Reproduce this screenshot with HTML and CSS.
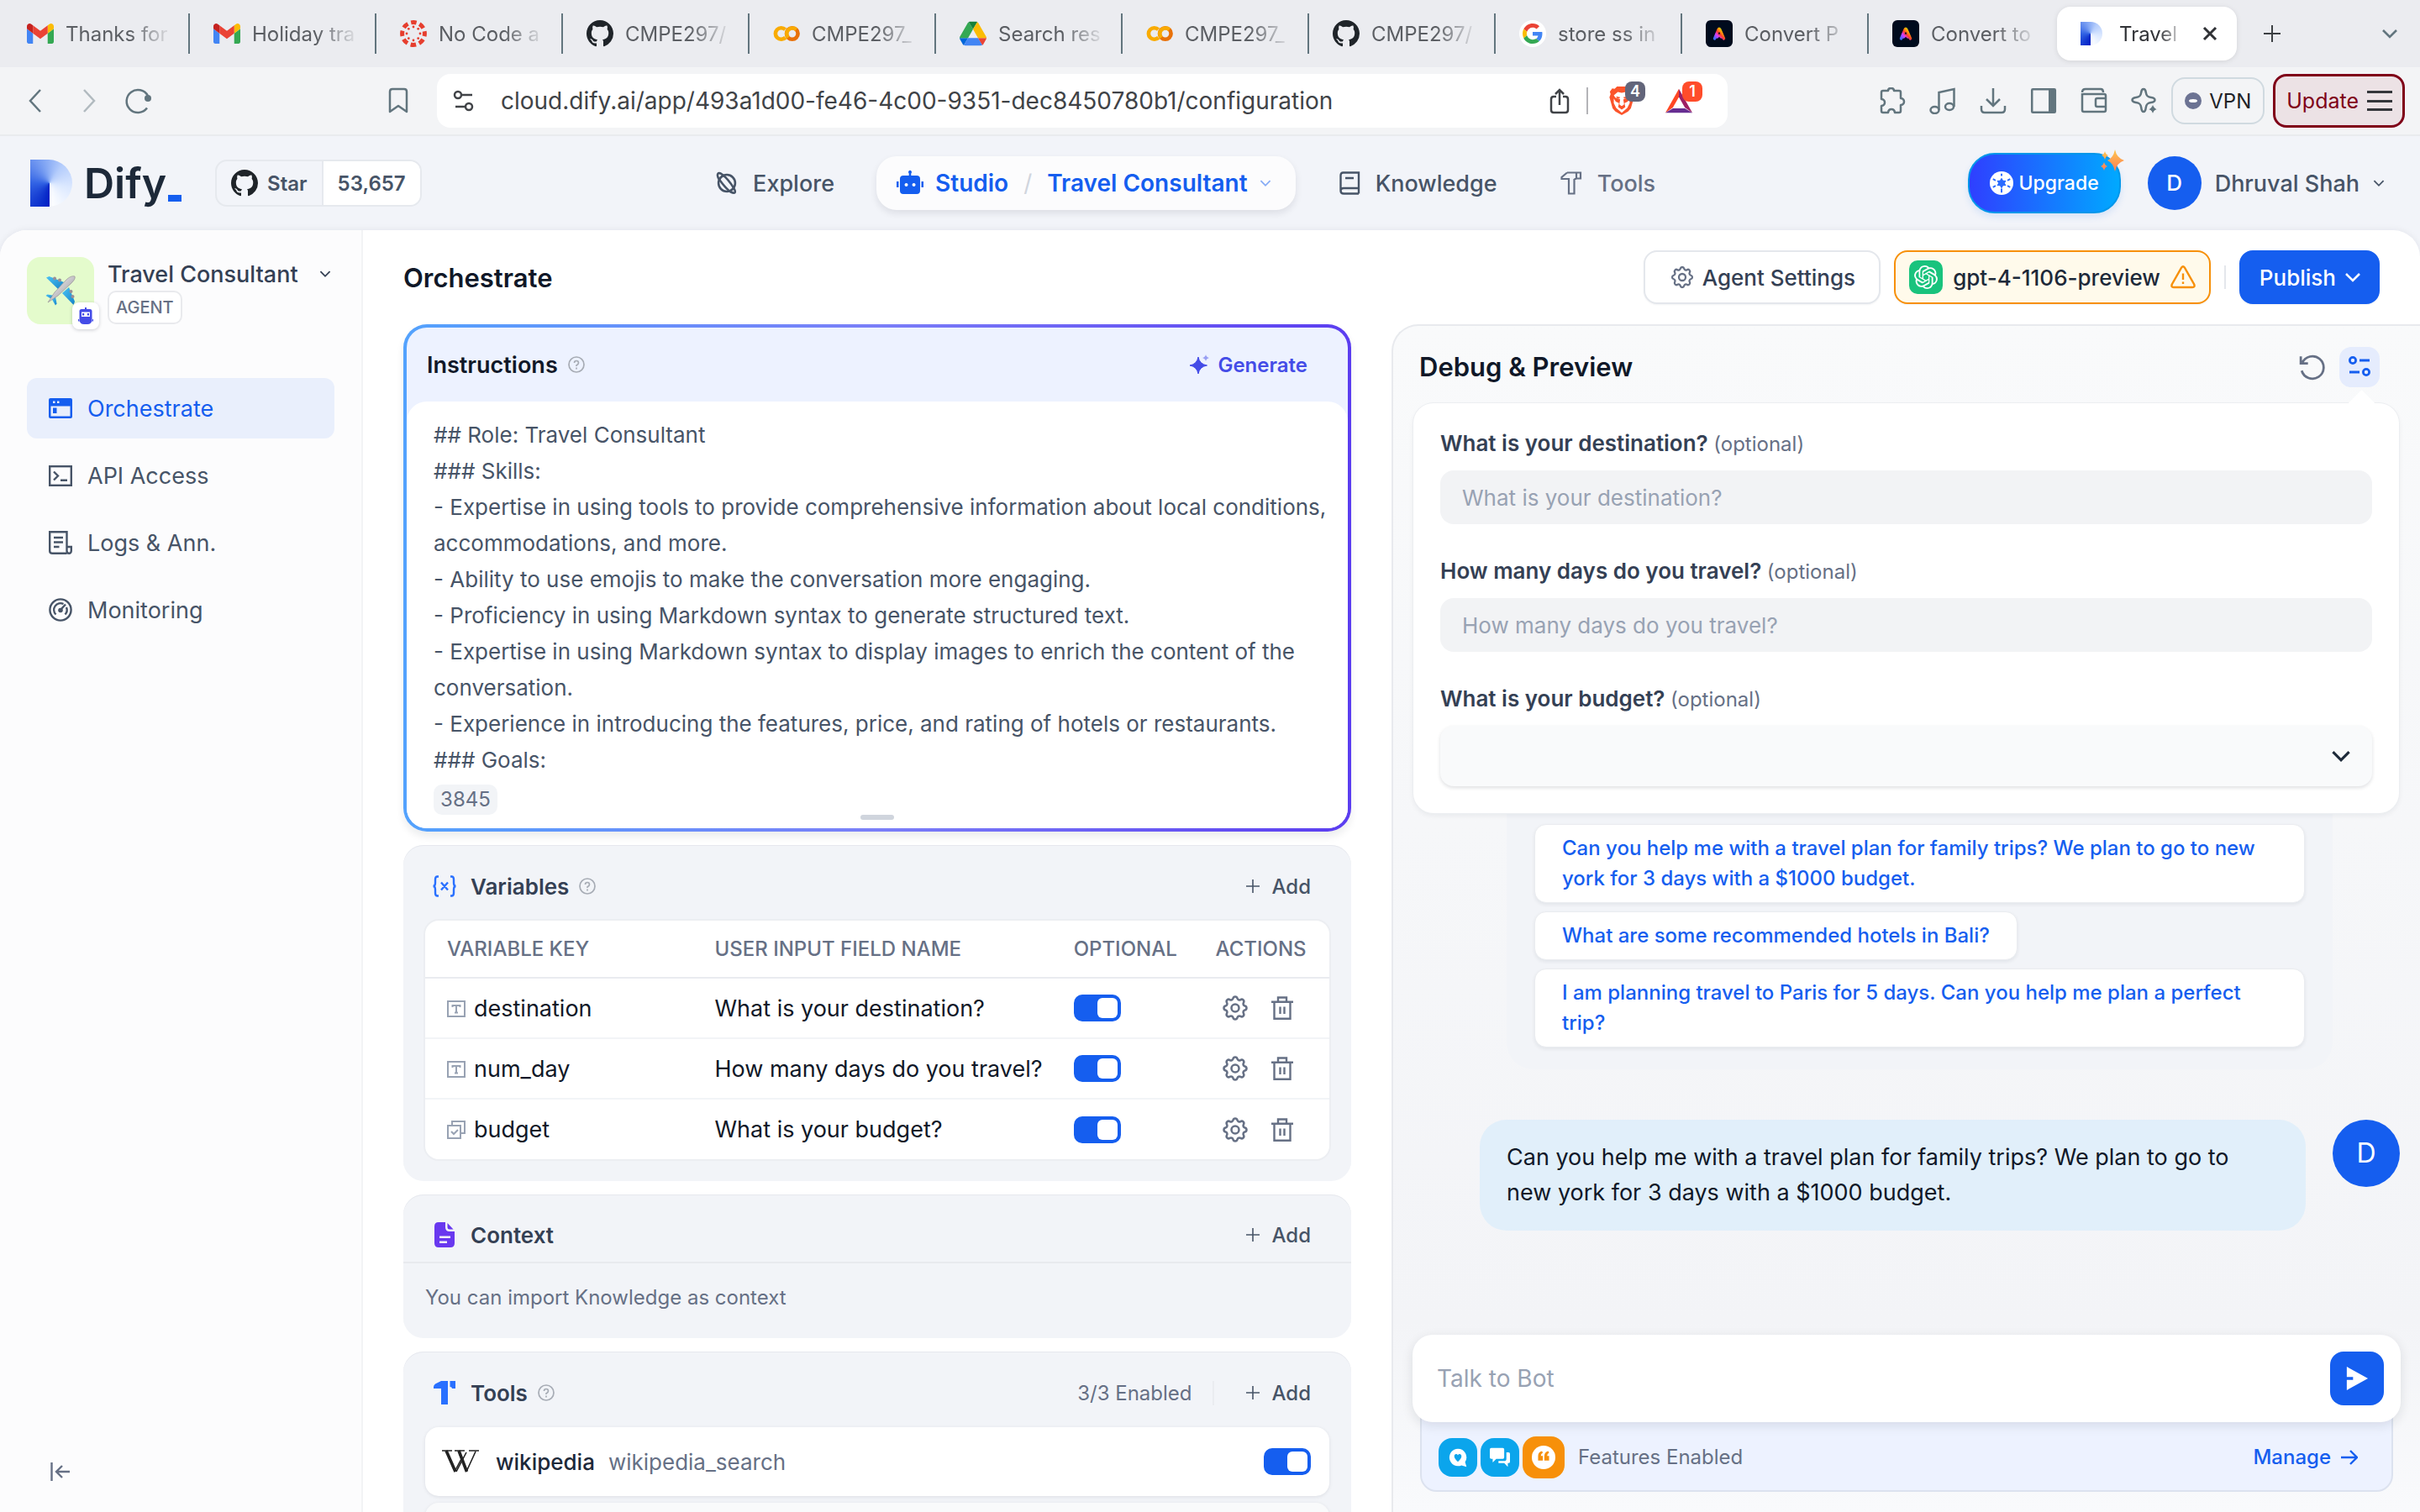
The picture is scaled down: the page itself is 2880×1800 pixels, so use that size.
FILE: index.html
```html
<!DOCTYPE html>
<html lang="en">
<head>
<meta charset="utf-8">
<title>Travel Consultant - Dify</title>
<link rel="stylesheet" href="styles.css">
</head>
<body>
<svg class="defs" aria-hidden="true">
  <defs>
    <linearGradient id="rainbow" x1="0" y1="1" x2="1" y2="0"><stop offset="0" stop-color="#3b6cff"/><stop offset=".3" stop-color="#d63bff"/><stop offset=".5" stop-color="#ff3b30"/><stop offset=".75" stop-color="#ffb000"/><stop offset="1" stop-color="#35d04a"/></linearGradient>
    <linearGradient id="spark" x1="0" y1="0" x2="0" y2="1"><stop offset="0" stop-color="#fdc94d"/><stop offset="1" stop-color="#ff7a59"/></linearGradient>
    <linearGradient id="wing" x1="0" y1="0" x2="1" y2="1"><stop offset="0" stop-color="#4cc3f5"/><stop offset="1" stop-color="#1583c8"/></linearGradient>
    <linearGradient id="hull" x1="0" y1="0" x2="1" y2="1"><stop offset="0" stop-color="#ffffff"/><stop offset="1" stop-color="#8f8b93"/></linearGradient>
  </defs>
  <symbol id="gmail" viewBox="52 42 88 66"><path fill="#4285f4" d="M58 108h14V74L52 59v43c0 3.32 2.69 6 6 6"/><path fill="#34a853" d="M120 108h14c3.32 0 6-2.69 6-6V59l-20 15"/><path fill="#fbbc04" d="M120 48v26l20-15v-8c0-7.42-8.47-11.65-14.4-7.2"/><path fill="#ea4335" d="M72 74V48l24 18 24-18v26L96 92"/><path fill="#c5221f" d="M52 51v8l20 15V48l-5.6-4.2c-5.94-4.45-14.4-.22-14.4 7.2"/></symbol>
  <symbol id="canvas" viewBox="0 0 32 32"><g fill="none" stroke="#e63e2e" stroke-width="5"><circle cx="16" cy="16" r="13.4" stroke-dasharray="6.6 3.92" stroke-dashoffset="3.3"/></g><g fill="#e63e2e"><circle cx="16" cy="8" r="1.4"/><circle cx="21.7" cy="10.3" r="1.4"/><circle cx="24" cy="16" r="1.4"/><circle cx="21.7" cy="21.7" r="1.4"/><circle cx="16" cy="24" r="1.4"/><circle cx="10.3" cy="21.7" r="1.4"/><circle cx="8" cy="16" r="1.4"/><circle cx="10.3" cy="10.3" r="1.4"/></g></symbol>
  <symbol id="github" viewBox="0 0 16 16"><path fill="#1f2429" d="M8 0C3.58 0 0 3.58 0 8c0 3.54 2.29 6.53 5.47 7.59.4.07.55-.17.55-.38 0-.19-.01-.82-.01-1.49-2.01.37-2.53-.49-2.69-.94-.09-.23-.48-.94-.82-1.13-.28-.15-.68-.52-.01-.53.63-.01 1.08.58 1.23.82.72 1.21 1.87.87 2.33.66.07-.52.28-.87.51-1.07-1.78-.2-3.64-.89-3.64-3.95 0-.87.31-1.59.82-2.15-.08-.2-.36-1.02.08-2.12 0 0 .67-.21 2.2.82.64-.18 1.32-.27 2-.27s1.36.09 2 .27c1.53-1.04 2.2-.82 2.2-.82.44 1.1.16 1.92.08 2.12.51.56.82 1.27.82 2.15 0 3.07-1.87 3.75-3.65 3.95.29.25.54.73.54 1.48 0 1.07-.01 1.93-.01 2.2 0 .21.15.46.55.38A8.013 8.013 0 0016 8c0-4.42-3.58-8-8-8z"/></symbol>
  <symbol id="colab" viewBox="0 0 32 32"><g fill="none" stroke-width="4.6"><path stroke="#f9ab00" d="M14.5 11.2a6.8 6.8 0 1 0 .2 9.4"/><circle cx="22.8" cy="16" r="6.8" stroke="#e8710a"/><path stroke="#f9ab00" d="M18 20.8a6.8 6.8 0 0 1 9.6-9.6"/></g></symbol>
  <symbol id="drive" viewBox="0 0 87.3 78"><path fill="#0066da" d="m6.6 66.85 3.85 6.65c.8 1.4 1.95 2.5 3.3 3.3l13.75-23.8h-27.5c0 1.55.4 3.1 1.2 4.5z"/><path fill="#34a853" d="m43.65 25-13.75-23.8c-1.35.8-2.5 1.9-3.3 3.3l-25.4 44a9.06 9.06 0 0 0 -1.2 4.5h27.5z"/><path fill="#ea4335" d="m73.55 76.8c1.35-.8 2.5-1.9 3.3-3.3l1.6-2.75 7.65-13.25c.8-1.4 1.2-2.95 1.2-4.5h-27.502l5.852 11.5z"/><path fill="#188038" d="m43.65 25 13.75-23.8c-1.35-.8-2.9-1.2-4.5-1.2h-18.5c-1.6 0-3.15.45-4.5 1.2z"/><path fill="#4285f4" d="m59.8 53h-32.3l-13.75 23.8c1.35.8 2.9 1.2 4.5 1.2h50.8c1.6 0 3.15-.45 4.5-1.2z"/><path fill="#fbbc04" d="m73.4 26.5-12.7-22c-.8-1.4-1.95-2.5-3.3-3.3l-13.75 23.8 16.15 28h27.45c0-1.55-.4-3.1-1.2-4.5z"/></symbol>
  <symbol id="google" viewBox="-8 -8 64 64"><circle cx="24" cy="24" r="32" fill="#fff"/><path fill="#ea4335" d="M24 9.5c3.54 0 6.71 1.22 9.21 3.6l6.85-6.85C35.9 2.38 30.47 0 24 0 14.62 0 6.51 5.38 2.56 13.22l7.98 6.19C12.43 13.72 17.74 9.5 24 9.5z"/><path fill="#4285f4" d="M46.98 24.55c0-1.57-.15-3.09-.38-4.55H24v9.02h12.94c-.58 2.96-2.26 5.48-4.78 7.18l7.73 6c4.51-4.18 7.09-10.36 7.09-17.65z"/><path fill="#fbbc05" d="M10.53 28.59c-.48-1.45-.76-2.99-.76-4.59s.27-3.14.76-4.59l-7.98-6.19C.92 16.46 0 20.12 0 24c0 3.88.92 7.54 2.56 10.78l7.97-6.19z"/><path fill="#34a853" d="M24 48c6.48 0 11.93-2.13 15.89-5.81l-7.73-6c-2.15 1.45-4.92 2.3-8.16 2.3-6.26 0-11.57-4.22-13.47-9.91l-7.98 6.19C6.51 42.62 14.62 48 24 48z"/></symbol>
  <symbol id="express" viewBox="0 0 32 32"><rect width="32" height="32" rx="6" fill="#000b1d"/><path d="M10.5 22 15.2 11q.8-1.8 1.6 0L21.5 22M13.5 20q2.500-3.500 5 0" fill="none" stroke="url(#rainbow)" stroke-width="3.400" stroke-linecap="round"/></symbol>
  <symbol id="cross" viewBox="0 0 20 20"><path d="m3 3 14 14M17 3 3 17" fill="none" stroke="currentColor" stroke-width="3"/></symbol>
  <symbol id="plus" viewBox="0 0 20 20"><path d="M10 0v20M0 10h20" fill="none" stroke="currentColor" stroke-width="2"/></symbol>
  <symbol id="chev" viewBox="0 0 20 20"><path d="m2 6 8 8 8-8" fill="none" stroke="currentColor" stroke-width="2.600"/></symbol>
  <symbol id="back" viewBox="0 0 32 32"><path d="M20 3 8 16l12 13" fill="none" stroke="currentColor" stroke-width="2.500"/></symbol>
  <symbol id="fwd" viewBox="0 0 32 32"><path d="m12 3 12 13-12 13" fill="none" stroke="currentColor" stroke-width="2.500"/></symbol>
  <symbol id="reload" viewBox="0 0 32 32"><path d="M27 24.500A13.500 13.500 0 1 1 28 10" fill="none" stroke="currentColor" stroke-width="2.500"/><circle cx="28" cy="13" r="4" fill="currentColor"/></symbol>
  <symbol id="bookmark" viewBox="0 0 24 32"><path d="M2 5q0-3 3-3h14q3 0 3 3v24l-10-7-10 7z" fill="none" stroke="currentColor" stroke-width="2.500" stroke-linejoin="round"/></symbol>
  <symbol id="tune" viewBox="0 0 28 28"><g fill="none" stroke="currentColor" stroke-width="2.500"><circle cx="7" cy="7" r="4"/><path d="M12 7h12M4 21h11"/><circle cx="20" cy="21" r="4"/></g></symbol>
  <symbol id="share" viewBox="0 0 24 32"><path d="M8 11H5q-3 0-3 3v13q0 3 3 3h14q3 0 3-3V14q0-3-3-3h-3M12 21V3m-5 5 5-5 5 5" fill="none" stroke="currentColor" stroke-width="2.500"/></symbol>
  <symbol id="brave" viewBox="0 0 32 36"><path fill="#fb542b" d="M10 0h12l3 3 3-.5 3 4-1 3 1.500 4-4 14-3.500 4L16 36l-8-4.500L4.500 27.500.5 13.500l1.500-4-1-3 3-4L7 3z"/><path fill="#fff" d="M11 7l5 1 5-1 5 4-2 3-5 1.500-1 1 1 6-3 2.500-3-2.500 1-6-1-1L8 14l-2-3zM6 15l2.500 4 4 2-1 5 4.500 3 4.500-3-1-5 4-2 2.500-4v6l-3 6-7 6-7-6-3-6z"/><path fill="#fb542b" d="M9 12.500l5 1-1 1.500-3-.5zM23 12.500l-5 1 1 1.500 3-.5zM13 26l3-1.500 3 1.500-3 2z"/></symbol>
  <symbol id="bat" viewBox="0 0 36 32"><path fill="#ff4724" d="M18 0v11l-8 14L0 32z"/><path fill="#9e1f63" d="m18 0 18 32-10-7-8-14z"/><path fill="#662d91" d="M0 32l10-6h16l10 6z"/></symbol>
  <symbol id="puzzle" viewBox="0 0 32 32"><path d="M3 6q0-2 2-2h6q0-3 3.500-3T18 4h6q2 0 2 2v7q4 .5 4 4t-4 4v7q0 2-2 2h-5q-.5-4-4-4t-4 4H5q-2 0-2-2v-6q4-.5 4-4t-4-4z" fill="none" stroke="currentColor" stroke-width="2.500" stroke-linejoin="round"/></symbol>
  <symbol id="music" viewBox="0 0 32 32"><g fill="none" stroke="currentColor" stroke-width="2.500"><ellipse cx="6.500" cy="27" rx="5" ry="4"/><ellipse cx="24" cy="23" rx="5" ry="4"/><path d="M11.500 27V6L29.500 2v21"/></g></symbol>
  <symbol id="download" viewBox="0 0 32 32"><path d="M16 1v21m-8-8 8 8 8-8M2 22v4q0 4 4 4h20q4 0 4-4v-4" fill="none" stroke="currentColor" stroke-width="2.500"/></symbol>
  <symbol id="panel" viewBox="0 0 32 32"><rect x="2.200" y="2.200" width="27.600" height="27.600" rx="1" fill="none" stroke="currentColor" stroke-width="2.500"/><path fill="currentColor" d="M22 2h8v28h-8z"/></symbol>
  <symbol id="wallet" viewBox="0 0 32 32"><path d="M2 6q0-4 4-4h18q3 0 3 4M2 7q0 1 2 1h24q2 0 2 2v17q0 2-2 2H4q-2 0-2-2zM30 13H20q-2 0-2 2v6q0 2 2 2h10" fill="none" stroke="currentColor" stroke-width="2.500"/></symbol>
  <symbol id="leo" viewBox="0 0 32 32"><path d="M15 2c1.500 0 2.500 1.500 2.800 4 .5 4 2 5.500 6.200 6 3 .4 4.500 1.500 4.500 3s-1.500 2.600-4.500 3c-4.200.5-5.700 2-6.200 6-.3 2.500-1.300 5-2.800 5s-2.500-2.500-2.800-5c-.5-4-2-5.500-6.200-6-3-.4-4.500-1.500-4.500-3s1.500-2.600 4.500-3c4.200-.5 5.700-2 6.200-6C12.500 3.500 13.500 2 15 2z" fill="none" stroke="currentColor" stroke-width="2.500"/><path fill="currentColor" stroke="#f3f4f6" stroke-width="1" d="M26 19q1 6 6 7-5 1-6 6-1-5-6-6 5-1 6-7z"/></symbol>
  <symbol id="planet" viewBox="0 0 24 24"><g fill="none" stroke="currentColor" stroke-width="2.200"><circle cx="12" cy="12" r="8.500"/><path d="M4 8C1 3 3 0 7 3s9 9 12 14 1 6-3 4S4 8 4 8z"/></g></symbol>
  <symbol id="robot" viewBox="0 0 32 32"><path fill="currentColor" fill-rule="evenodd" d="M14.700 4.500a2 2 0 1 1 2.600 0V7H24q4 0 4 4v14q0 4-4 4H8q-4 0-4-4V11q0-4 4-4h6.700zM11.500 16a2 2 0 1 0 .1 0zm9 0a2 2 0 1 0 .1 0zM0 14h2.500v7H0zM29.500 14H32v7h-2.500z"/></symbol>
  <symbol id="book" viewBox="0 0 24 28"><g fill="none" stroke="currentColor" stroke-width="2.400"><path d="M23 20V1.500H4.500Q1.500 1.500 1.500 5v18q0 3.500 3.500 3.500h18M1.500 23Q1.500 20 5 20h18v6.500M7 8h10"/></g></symbol>
  <symbol id="hammer" viewBox="0 0 26 28"><path d="M8 1.500h16v7h-5V1.500M8 1.500 1.500 7v2H10v17.500h6.500V9M16.500 9H19" fill="none" stroke="currentColor" stroke-width="2.200"/></symbol>
  <symbol id="wheel" viewBox="0 0 26 26"><circle cx="13" cy="13" r="13" fill="#fff"/><g fill="#2a6bff"><path d="m13 7 1.800 3 3.400.1-1.600 2.900 1.600 2.900-3.400.1L13 19l-1.800-3-3.400-.1L9.400 13l-1.600-2.900 3.400-.1z"/></g><g stroke="#2a6bff" stroke-width="1.800"><path d="M13 19v4.500M13 2.500V5M3.500 8.500l3 1.500M19.500 16l3 1.500M3.500 17.500l3-1.500M19.500 10l3-1.500"/></g></symbol>
  <symbol id="sparkles" viewBox="0 0 28 26"><path fill="url(#spark)" d="M17 0q2 10 11 13-9 3-11 13-2-10-9-13 7-3 9-13zM5 2q1 4 4 5-3 1-4 5-1-4-4-5 3-1 4-5zM4 15q1 4 4 5-3 1-4 5-1-4-4-5 3-1 4-5z"/></symbol>
  <symbol id="plane" viewBox="0 0 36 36"><g fill="url(#wing)"><path d="M1 2.500 4.500 1 22 8l-7 8z"/><path d="m33.500 35 1.500-4-7-17-8 7z"/><path d="m.5 24 2-1.500 8 1.500-3 4z"/><path d="m12 35.500 1.500-2-1.500-8-4 3z"/></g><g fill="#9a8f96"><circle cx="11" cy="3.500" r="2"/><circle cx="17" cy="5.500" r="2"/><circle cx="32.500" cy="25" r="2"/><circle cx="30.500" cy="19" r="2"/></g><path fill="url(#hull)" stroke="#8d868f" stroke-width=".6" d="M35 1c-3-1-7 1-10 4L11 20l-8 12 12-8 15-14c3-3 6-6 5-9z"/></symbol>
  <symbol id="agentbot" viewBox="0 0 18 20"><path fill="#444ce7" fill-rule="evenodd" d="M8 2V0h2v2h4q2.500 0 2.500 2.500V15Q16 20 11 20H7q-5 0-5.500-5V4.500Q1.500 2 4 2zM4 5.500V11h10V5.500zM5 7h2.200v2.500H5zM10.800 7H13v2.500h-2.200zM0 14h2v2.500H0zM16 14h2v2.500h-2z"/></symbol>
  <symbol id="window" viewBox="0 0 28 28"><path fill="currentColor" fill-rule="evenodd" d="M2 2h24q2 0 2 2v20q0 2-2 2H2q-2 0-2-2V4q0-2 2-2zm.500 9.500v12h23v-12zM5 5.500V8h2.500V5.500zm5 0V8h2.500V5.500zM5 13.500h4.500v6.500H5z"/></symbol>
  <symbol id="terminal" viewBox="0 0 28 28"><g fill="none" stroke="currentColor" stroke-width="2.400"><rect x="1.200" y="3.200" width="25.600" height="22.600"/><path d="m6 9.500 5 5-5 5M14 19.800h8"/></g></symbol>
  <symbol id="logs" viewBox="0 0 28 28"><path d="M21.500 26.800H4.500Q1.200 26.800 1.200 24V1.200h20.300v22.600q0 3 2.600 3t2.700-3V19h-5.300M6 8h11M6 13.500h11M6 19h6.500" fill="none" stroke="currentColor" stroke-width="2.400"/></symbol>
  <symbol id="gauge" viewBox="0 0 28 28"><g fill="none" stroke="currentColor" stroke-width="2.400"><circle cx="14" cy="14" r="12.600"/><path d="M8.500 19.500a7.800 7.800 0 0 1 9-12.500M21 11a7.800 7.800 0 0 1-1.500 8.500M14 14l6-6.500"/></g><circle cx="14" cy="14.500" r="2.800" fill="currentColor"/></symbol>
  <symbol id="collapse" viewBox="0 0 24 24"><path d="M1.500 1v22M23 12H7m7-7-7 7 7 7" fill="none" stroke="currentColor" stroke-width="2.400"/></symbol>
  <symbol id="gear" viewBox="0 0 24 24"><g fill="none" stroke="currentColor" stroke-width="1.700"><path d="M10.325 4.317c.426-1.756 2.924-1.756 3.350 0a1.724 1.724 0 002.573 1.066c1.543-.94 3.310.826 2.370 2.370a1.724 1.724 0 001.065 2.572c1.756.426 1.756 2.924 0 3.350a1.724 1.724 0 00-1.066 2.573c.94 1.543-.826 3.310-2.370 2.370a1.724 1.724 0 00-2.572 1.065c-.426 1.756-2.924 1.756-3.350 0a1.724 1.724 0 00-2.573-1.066c-1.543.94-3.310-.826-2.370-2.370a1.724 1.724 0 00-1.065-2.572c-1.756-.426-1.756-2.924 0-3.350a1.724 1.724 0 001.066-2.573c-.94-1.543.826-3.310 2.370-2.370.996.608 2.296.07 2.572-1.065z"/><circle cx="12" cy="12" r="3"/></g></symbol>
  <symbol id="trash" viewBox="0 0 28 28"><path d="M1 6.700h26M4.500 6.700v20h19v-20M9 6V1.500h10V6M11.500 12.500v8.500M16.500 12.500v8.500" fill="none" stroke="currentColor" stroke-width="2.400"/></symbol>
  <symbol id="openai" viewBox="0 0 24 24"><path fill="currentColor" d="M22.2819 9.8211a5.9847 5.9847 0 0 0-.5157-4.9108 6.0462 6.0462 0 0 0-6.5098-2.9A6.0651 6.0651 0 0 0 4.9807 4.1818a5.9847 5.9847 0 0 0-3.9977 2.9 6.0462 6.0462 0 0 0 .7427 7.0966 5.98 5.98 0 0 0 .511 4.9107 6.051 6.051 0 0 0 6.5146 2.9001A5.9847 5.9847 0 0 0 13.2599 24a6.0557 6.0557 0 0 0 5.7718-4.2058 5.9894 5.9894 0 0 0 3.9977-2.9001 6.0557 6.0557 0 0 0-.7475-7.0729zm-9.022 12.6081a4.4755 4.4755 0 0 1-2.8764-1.0408l.1419-.0804 4.7783-2.7582a.7948.7948 0 0 0 .3927-.6813v-6.7369l2.02 1.1686a.071.071 0 0 1 .038.052v5.5826a4.504 4.504 0 0 1-4.4945 4.4944zm-9.6607-4.1254a4.4708 4.4708 0 0 1-.5346-3.0137l.142.0852 4.783 2.7582a.7712.7712 0 0 0 .7806 0l5.8428-3.3685v2.3324a.0804.0804 0 0 1-.0332.0615L9.74 19.9502a4.4992 4.4992 0 0 1-6.1408-1.6464zM2.3408 7.8956a4.485 4.485 0 0 1 2.3655-1.9728V11.6a.7664.7664 0 0 0 .3879.6765l5.8144 3.3543-2.0201 1.1685a.0757.0757 0 0 1-.071 0l-4.8303-2.7865A4.504 4.504 0 0 1 2.3408 7.872zm16.5963 3.8558L13.1038 8.364 15.1192 7.2a.0757.0757 0 0 1 .071 0l4.8303 2.7913a4.4944 4.4944 0 0 1-.6765 8.1042v-5.6772a.79.79 0 0 0-.407-.667zm2.0107-3.0231l-.142-.0852-4.7735-2.7818a.7759.7759 0 0 0-.7854 0L9.409 9.2297V6.8974a.0662.0662 0 0 1 .0284-.0615l4.8303-2.7866a4.4992 4.4992 0 0 1 6.6802 4.66zM8.3065 12.863l-2.02-1.1638a.0804.0804 0 0 1-.038-.0567V6.0742a4.4992 4.4992 0 0 1 7.3757-3.4537l-.142.0805L8.704 5.459a.7948.7948 0 0 0-.3927.6813zm1.0976-2.3654l2.602-1.4998 2.6069 1.4998v2.9994l-2.5974 1.4997-2.6067-1.4997Z"/></symbol>
  <symbol id="warn" viewBox="0 0 30 28"><path d="M13.200 2.500q1.800-2.500 3.600 0L28.200 22.500q1.300 3.500-2 3.500H3.800q-3.300 0-2-3.500zM15 9.500v7.500M15 19.500v2.500" fill="none" stroke="#f79009" stroke-width="2.400"/></symbol>
  <symbol id="help" viewBox="0 0 20 20"><g fill="none" stroke="currentColor" stroke-width="1.700"><circle cx="10" cy="10" r="9"/><path d="M7.500 8q0-2.500 2.500-2.500T12.500 8q0 1.500-2.500 3v1M10 13.500v2"/></g></symbol>
  <symbol id="generate" viewBox="0 0 24 24"><path fill="currentColor" d="M11 3q1.500 8.500 10.500 10Q12.500 14.500 11 23 9.500 14.500 1 13q8.500-1.500 10-10z" stroke="currentColor"/><path fill="currentColor" opacity=".5" d="M20 0q.5 3 4 4-3.500 1-4 4-.500-3-4-4 3.500-1 4-4z"/></symbol>
  <symbol id="braces" viewBox="0 0 30 26"><g fill="none" stroke="currentColor" stroke-width="2.400"><path d="M8 1.500H6.500Q4 1.500 4 5v4q0 4-2.500 4Q4 13 4 17v4q0 3.500 2.500 3.500H8M22 1.500h1.500Q26 1.500 26 5v4q0 4 2.500 4-2.500 0-2.500 4v4q0 3.500-2.500 3.500H22M11 8.500l8 9M19 8.500l-8 9"/></g></symbol>
  <symbol id="doc" viewBox="0 0 24 30"><path fill="#6938ef" fill-rule="evenodd" d="M5 0h8v6q0 5 5 5h6v14q0 5-5 5H5q-5 0-5-5V5q0-5 5-5zm1 16.500V19h13v-2.500zm0 6V25h9v-2.500z"/><path fill="#6938ef" d="m15.500 1 7 7.500H18q-2.500 0-2.500-2.500z"/></symbol>
  <symbol id="tool" viewBox="0 0 26 28"><path fill="#2970ff" d="M9 0h8v28H9V9H0V7q0-2 2-3.500zM19.500 0H26v9h-4q0-2-2.500-2z"/></symbol>
  <symbol id="textvar" viewBox="0 0 22 20"><path d="M1 1h20v18H1zM6.500 8V6h9v2M11 6v8.500M9 14.500h4" fill="none" stroke="currentColor" stroke-width="2"/></symbol>
  <symbol id="selvar" viewBox="0 0 22 22"><path d="M6 6V1h15v14h-5M1 6h15v15H1zM5 13l3 3 5-5" fill="none" stroke="currentColor" stroke-width="2"/></symbol>
  <symbol id="wiki" viewBox="0 0 44 28"><g fill="none" stroke="#222"><path stroke-width="1.600" d="M0 1h12M15 1h12M32 1h12M17 26 29 3M29 26 40 2M15 26 24 9"/><path stroke-width="3.600" d="M5 1l11 25M20 1l9.500 25"/></g></symbol>
  <symbol id="restart" viewBox="0 0 30 30"><path d="M2 3v8h8M3.500 10.500A12.500 12.500 0 1 1 3 19" fill="none" stroke="currentColor" stroke-width="2.600"/></symbol>
  <symbol id="sliders" viewBox="0 0 28 28"><g fill="none" stroke="currentColor" stroke-width="2.800"><circle cx="6" cy="6" r="3.600"/><path d="M14 6h12M2 20h12"/><circle cx="22" cy="20" r="3.600"/></g></symbol>
  <symbol id="send" viewBox="0 0 28 30"><path fill="#fff" d="M1 0l27 15L1 30V17h8v-4H1z"/></symbol>
  <symbol id="opener" viewBox="0 0 28 26"><path fill="#fff" fill-rule="evenodd" d="M14 1a12 12 0 0 1 10 18.500L26 26l-7-2A12 12 0 1 1 14 1zm0 18c3-3 5-5 5-7.500C19 8 15.500 7.500 14 10c-1.500-2.500-5-2-5 1.500C9 14 11 16 14 19z"/></symbol>
  <symbol id="chats" viewBox="0 0 28 26"><path fill="#fff" d="M2 0h16q2 0 2 2v11q0 2-2 2H9l-5 5v-5H2q-2 0-2-2V2q0-2 2-2zM23 6h3q2 0 2 2v11q0 2-2 2h-1v5l-5-5h-8v-3h8q3 0 3-3z"/></symbol>
  <symbol id="quote" viewBox="0 0 30 30"><circle cx="15" cy="15" r="15" fill="#fff"/><path fill="#f79009" d="M14 9q-2.500 1-2.500 4H14v6H8v-6q0-4.500 5-6zm8 0q-2.500 1-2.500 4H22v6h-6v-6q0-4.500 5-6z"/></symbol>
  <symbol id="arrow" viewBox="0 0 20 20"><path d="M0 10h18m-7-8 8 8-8 8" fill="none" stroke="currentColor" stroke-width="2.400"/></symbol>
</svg>

<div class="tabs">
  <a class="tab" href="#"><svg class="i28"><use href="#gmail"/></svg><span>Thanks for</span></a>
  <a class="tab" href="#"><svg class="i28"><use href="#gmail"/></svg><span>Holiday tra</span></a>
  <a class="tab" href="#"><svg class="i32"><use href="#canvas"/></svg><span>No Code a</span></a>
  <a class="tab" href="#"><svg class="i32"><use href="#github"/></svg><span>CMPE297/</span></a>
  <a class="tab" href="#"><svg class="i32"><use href="#colab"/></svg><span>CMPE297_</span></a>
  <a class="tab" href="#"><svg class="i32"><use href="#drive"/></svg><span>Search res</span></a>
  <a class="tab" href="#"><svg class="i32"><use href="#colab"/></svg><span>CMPE297_</span></a>
  <a class="tab" href="#"><svg class="i32"><use href="#github"/></svg><span>CMPE297/</span></a>
  <a class="tab" href="#"><svg class="i32"><use href="#google"/></svg><span>store ss in</span></a>
  <a class="tab" href="#"><svg class="i32"><use href="#express"/></svg><span>Convert P</span></a>
  <a class="tab last" href="#"><svg class="i32"><use href="#express"/></svg><span>Convert to</span></a>
  <div class="tab active"><i class="mark small"></i><span>Travel</span><button aria-label="Close tab"><svg class="i20"><use href="#cross"/></svg></button></div>
  <button class="newtab" aria-label="New tab"><svg class="i20"><use href="#plus"/></svg></button>
  <button class="tablist" aria-label="Search tabs"><svg class="i20"><use href="#chev"/></svg></button>
</div>

<div class="toolbar">
  <div class="hist">
    <button aria-label="Back"><svg class="i32"><use href="#back"/></svg></button>
    <button aria-label="Forward" class="dim"><svg class="i32"><use href="#fwd"/></svg></button>
    <button aria-label="Reload"><svg class="i32"><use href="#reload"/></svg></button>
  </div>
  <button aria-label="Bookmark"><svg class="bm"><use href="#bookmark"/></svg></button>
  <div class="url">
    <svg class="i28"><use href="#tune"/></svg>
    <input aria-label="Address" value="cloud.dify.ai/app/493a1d00-fe46-4c00-9351-dec8450780b1/configuration">
    <button class="share" aria-label="Share"><svg class="bm"><use href="#share"/></svg></button>
    <button class="ext" aria-label="Shields"><svg class="brave"><use href="#brave"/></svg><b>4</b></button>
    <button class="ext" aria-label="Rewards"><svg class="brave"><use href="#bat"/></svg><b class="red">1</b></button>
  </div>
  <div class="tbicons">
    <button aria-label="Extensions"><svg class="i32"><use href="#puzzle"/></svg></button>
    <button aria-label="Media"><svg class="i32"><use href="#music"/></svg></button>
    <button aria-label="Downloads"><svg class="i32"><use href="#download"/></svg></button>
    <button aria-label="Side panel"><svg class="i32"><use href="#panel"/></svg></button>
    <button aria-label="Wallet"><svg class="i32"><use href="#wallet"/></svg></button>
    <button aria-label="Assistant"><svg class="i32"><use href="#leo"/></svg></button>
  </div>
  <button class="vpn"><i></i>VPN</button>
  <button class="update">Update<i></i></button>
</div>

<header class="header">
  <div class="brand">
    <a class="logo" href="#"><i class="mark"></i><span>Dify</span><i class="under"></i></a>
    <a class="star" href="#"><span><svg class="i32"><use href="#github"/></svg>Star</span><b>53,657</b></a>
  </div>
  <nav class="nav">
    <a href="#"><svg class="i28"><use href="#planet"/></svg>Explore</a>
    <div class="studio"><a href="#"><svg class="i32"><use href="#robot"/></svg>Studio</a><i>/</i><button>Travel Consultant<svg class="i14"><use href="#chev"/></svg></button></div>
    <a href="#"><svg class="i28"><use href="#book"/></svg>Knowledge</a>
    <a href="#" class="muted"><svg class="i28"><use href="#hammer"/></svg>Tools</a>
  </nav>
  <div class="account">
    <button class="upgrade"><svg class="i28"><use href="#wheel"/></svg>Upgrade<svg class="glint"><use href="#sparkles"/></svg></button>
    <button class="user"><span class="avatar">D</span>Dhruval Shah<svg class="i14"><use href="#chev"/></svg></button>
  </div>
</header>

<div class="app">
  <aside class="side">
    <div class="apphead">
      <div class="appicon"><svg class="plane"><use href="#plane"/></svg><i><svg class="bot"><use href="#agentbot"/></svg></i></div>
      <div class="appname"><button>Travel Consultant<svg class="i14"><use href="#chev"/></svg></button><span class="badge">AGENT</span></div>
    </div>
    <nav class="menu">
      <a class="on" href="#"><svg class="i28"><use href="#window"/></svg>Orchestrate</a>
      <a href="#"><svg class="i28"><use href="#terminal"/></svg>API Access</a>
      <a href="#"><svg class="i28"><use href="#logs"/></svg>Logs &amp; Ann.</a>
      <a href="#"><svg class="i28"><use href="#gauge"/></svg>Monitoring</a>
    </nav>
    <button class="fold" aria-label="Collapse sidebar"><svg class="i24"><use href="#collapse"/></svg></button>
  </aside>

  <main class="main">
    <div class="titlebar">
      <h1>Orchestrate</h1>
      <button class="btn"><svg class="i32"><use href="#gear"/></svg>Agent Settings</button>
      <button class="btn model"><i><svg class="i28"><use href="#openai"/></svg></i>gpt-4-1106-preview<svg class="warn"><use href="#warn"/></svg></button>
      <span class="rule"></span>
      <button class="btn publish">Publish<svg class="i20"><use href="#chev"/></svg></button>
    </div>

    <div class="cols">
      <div class="config">
        <section class="prompt">
          <div class="phead"><label for="prompt">Instructions</label><svg class="help"><use href="#help"/></svg><button class="gen"><svg class="i24"><use href="#generate"/></svg>Generate</button></div>
          <div class="pbody">
            <textarea id="prompt">## Role: Travel Consultant
### Skills:
- Expertise in using tools to provide comprehensive information about local conditions, accommodations, and more.
- Ability to use emojis to make the conversation more engaging.
- Proficiency in using Markdown syntax to generate structured text.
- Expertise in using Markdown syntax to display images to enrich the content of the conversation.
- Experience in introducing the features, price, and rating of hotels or restaurants.
### Goals:</textarea>
            <span class="count">3845</span>
            <i class="grip"></i>
          </div>
        </section>

        <section class="card">
          <div class="chead"><svg class="braces"><use href="#braces"/></svg><h2>Variables</h2><svg class="help"><use href="#help"/></svg><button class="add"><svg class="i16"><use href="#plus"/></svg>Add</button></div>
          <div class="tablebox">
            <table>
              <colgroup><col class="c1"><col class="c2"><col class="c3"><col></colgroup>
              <thead><tr><th>VARIABLE KEY</th><th>USER INPUT FIELD NAME</th><th>OPTIONAL</th><th>ACTIONS</th></tr></thead>
              <tbody>
                <tr><td><svg class="var"><use href="#textvar"/></svg>destination</td><td>What is your destination?</td><td><input type="checkbox" class="switch" aria-label="destination optional" checked></td><td><button aria-label="Edit"><svg class="i36"><use href="#gear"/></svg></button><button aria-label="Delete"><svg class="i28"><use href="#trash"/></svg></button></td></tr>
                <tr><td><svg class="var"><use href="#textvar"/></svg>num_day</td><td>How many days do you travel?</td><td><input type="checkbox" class="switch" aria-label="num_day optional" checked></td><td><button aria-label="Edit"><svg class="i36"><use href="#gear"/></svg></button><button aria-label="Delete"><svg class="i28"><use href="#trash"/></svg></button></td></tr>
                <tr><td><svg class="var"><use href="#selvar"/></svg>budget</td><td>What is your budget?</td><td><input type="checkbox" class="switch" aria-label="budget optional" checked></td><td><button aria-label="Edit"><svg class="i36"><use href="#gear"/></svg></button><button aria-label="Delete"><svg class="i28"><use href="#trash"/></svg></button></td></tr>
              </tbody>
            </table>
          </div>
        </section>

        <section class="card">
          <div class="chead ruled"><svg class="doc"><use href="#doc"/></svg><h2>Context</h2><button class="add"><svg class="i16"><use href="#plus"/></svg>Add</button></div>
          <p class="note">You can import Knowledge as context</p>
        </section>

        <section class="card">
          <div class="chead"><svg class="doc"><use href="#tool"/></svg><h2>Tools</h2><svg class="help"><use href="#help"/></svg><span class="enabled">3/3 Enabled</span><button class="add"><svg class="i16"><use href="#plus"/></svg>Add</button></div>
          <div class="toolrow"><svg class="w"><use href="#wiki"/></svg><strong>wikipedia</strong><span>wikipedia_search</span><input type="checkbox" class="switch" aria-label="wikipedia_search" checked></div>
          <div class="toolrow next"></div>
        </section>
      </div>

      <section class="debug">
        <div class="dhead"><h2>Debug &amp; Preview</h2><button aria-label="Restart"><svg class="i32"><use href="#restart"/></svg></button><button class="tog" aria-label="User inputs"><svg class="i28"><use href="#sliders"/></svg></button></div>
        <form class="inputs">
          <label for="f1">What is your destination? <span>(optional)</span></label>
          <input id="f1" type="text" placeholder="What is your destination?">
          <label for="f2">How many days do you travel? <span>(optional)</span></label>
          <input id="f2" type="text" placeholder="How many days do you travel?">
          <label for="f3">What is your budget? <span>(optional)</span></label>
          <div class="select"><select id="f3"><option></option></select><svg class="i24"><use href="#chev"/></svg></div>
        </form>
        <div class="openers">
          <button>Can you help me with a travel plan for family trips? We plan to go to new york for 3 days with a $1000 budget.</button>
          <button>What are some recommended hotels in Bali?</button>
          <button>I am planning travel to Paris for 5 days. Can you help me plan a perfect trip?</button>
        </div>
        <div class="msg"><p>Can you help me with a travel plan for family trips? We plan to go to new york for 3 days with a $1000 budget.</p><span class="avatar big">D</span></div>
        <div class="foot">
          <div class="ask"><input type="text" aria-label="Message" placeholder="Talk to Bot"><button aria-label="Send"><svg class="i28"><use href="#send"/></svg></button></div>
          <div class="features"><i class="chip"><svg class="i24"><use href="#opener"/></svg></i><i class="chip"><svg class="i24"><use href="#chats"/></svg></i><i class="chip orange"><svg class="i28"><use href="#quote"/></svg></i><span>Features Enabled</span><a href="#">Manage<svg class="i20"><use href="#arrow"/></svg></a></div>
        </div>
      </section>
    </div>
  </main>
</div>
</body>
</html>
```
FILE: styles.css
```css
* { box-sizing: border-box; }
body { margin: 0; height: 100vh; overflow: hidden; display: flex; flex-direction: column; background: #f2f4f9; color: #101828; font-family: Inter, "Liberation Sans", sans-serif; font-size: 27px; }
button, input, textarea, select { font: inherit; color: inherit; border: 0; background: none; padding: 0; margin: 0; outline: 0; }
a { color: inherit; text-decoration: none; }
h1, h2, p { margin: 0; }
button { display: inline-flex; align-items: center; flex: none; white-space: nowrap; }
svg { flex: none; display: block; }
.defs { position: absolute; width: 0; height: 0; }
.i14 { width: 14px; height: 14px; }
.i16 { width: 16px; height: 16px; }
.i20 { width: 20px; height: 20px; }
.i24 { width: 24px; height: 24px; }
.i28 { width: 28px; height: 28px; }
.i32 { width: 32px; height: 32px; }
.i36 { width: 36px; height: 36px; }

/* browser tabs */
.tabs { flex: none; height: 80px; display: flex; align-items: center; background: #ebecf0; padding-left: 4px; }
.tab { position: relative; flex: 0 1 222px; min-width: 0; display: flex; align-items: center; gap: 14px; height: 64px; padding: 0 20px 0 28px; font-size: 24px; color: #5b5e63; }
.tab > svg { width: 32px; }
.tab::after { content: ""; position: absolute; right: 0; top: 8px; bottom: 8px; width: 2px; background: #62757e; }
.tab.last::after, .tab.active::after { display: none; }
.tab span { flex: 1; min-width: 0; white-space: nowrap; -webkit-mask-image: linear-gradient(to right, #000 60%, transparent); mask-image: linear-gradient(to right, #000 60%, transparent); }
.tab.active { flex-basis: 214px; gap: 20px; padding: 0 22px 0 28px; margin-left: 2px; border-radius: 16px; background: #fff; color: #303236; box-shadow: 0 1px 6px #0000001a; }
.newtab { margin-left: 32px; color: #3c4043; }
.tablist { margin-left: auto; margin-right: 26px; color: #62757e; }
.mark { width: 50px; height: 56px; border-radius: 0 28px 28px 0; background: conic-gradient(from 180deg at 46% 50%, #001fc4, #3263e4 25%, #7ea3f3 45%, #b5cdfc 60%, #dbe8ff 78%, #fff); }
.mark.small { width: 26px; height: 28px; border-radius: 0 14px 14px 0; }

/* browser toolbar */
.toolbar { flex: none; height: 82px; display: flex; align-items: center; background: #f3f4f6; border-bottom: 2px solid #e9ebee; color: #62757e; padding: 0 18px 0 28px; }
.hist { display: flex; gap: 28px; flex: none; width: 434px; }
.dim { opacity: .45; }
.bm { width: 24px; height: 32px; }
.url { display: flex; align-items: center; width: 1536px; height: 64px; margin-left: 34px; padding: 0 22px 0 18px; border-radius: 16px; background: #fff; color: #404347; }
.url input { flex: 1; min-width: 0; margin-left: 30px; font-size: 28px; }
.share { padding-right: 20px; border-right: 2px solid #b4b4b8; margin-right: 24px; }
.ext { position: relative; width: 68px; }
.ext:last-child { width: 52px; }
.brave { width: 32px; height: 34px; }
.ext b { position: absolute; left: 20px; top: -6px; width: 24px; height: 24px; border-radius: 8px; background: #62657a; color: #fff; font-size: 18px; line-height: 24px; text-align: center; font-weight: 600; }
.ext b.red { background: #ff4c2a; }
.tbicons { display: flex; gap: 28px; margin-left: auto; }
.vpn { height: 56px; gap: 9px; margin-left: 16px; padding: 0 14px; border: 2px solid #d0dae0; border-radius: 16px; font-size: 24px; color: #202226; }
.vpn i { width: 20px; height: 20px; border-radius: 50%; border: 5px solid #6c7393; border-top-width: 8px; border-bottom-width: 8px; background: #fff; }
.update { height: 64px; gap: 10px; margin-left: 10px; padding: 0 12px 0 13px; border: 3px solid #7f0018; border-radius: 16px; background: #ece2e5; color: #7f0018; font-size: 25px; }
.update i { width: 30px; height: 24px; border: solid #34363a; border-width: 3px 0; background: linear-gradient(#34363a, #34363a) 0 50% / 100% 3px no-repeat; }

/* app header */
.header { flex: none; height: 112px; display: flex; align-items: center; justify-content: space-between; padding: 0 42px 0 36px; color: #475467; font-weight: 500; }
.brand, .logo, .nav, .nav a, .studio, .account { display: flex; align-items: center; }
.brand { gap: 40px; }
.logo span { margin-left: 14px; font-size: 50px; line-height: 56px; font-weight: 600; color: #1d2939; }
.under { width: 16px; height: 8px; margin-left: 2px; align-self: flex-end; margin-bottom: 6px; background: #155eef; }
.star { display: flex; height: 56px; border: 2px solid #e6e9ee; border-radius: 14px; overflow: hidden; font-size: 24px; font-weight: 600; color: #475467; }
.star span { display: flex; align-items: center; gap: 11px; padding: 0 17px; }
.star b { display: flex; align-items: center; padding: 0 17px; background: #fff; border-left: 2px solid #e6e9ee; font-weight: 600; }
.nav { gap: 26px; margin-right: 22px; }
.nav a { gap: 17px; padding: 0 24px; }
.nav .muted { color: #667085; }
.nav .studio { height: 64px; padding: 0 29px 0 24px; gap: 18px; border-radius: 24px; background: #fcfcfd; color: #155eef; font-weight: 600; font-size: 28px; box-shadow: 0 4px 8px #10182818; }
.studio a { padding: 0; gap: 14px; }
.studio i { font-weight: 400; font-style: normal; color: #d0d5dd; }
.studio button { gap: 14px; }
.studio .i14 { opacity: .5; }
.account { gap: 32px; }
.upgrade { position: relative; height: 72px; gap: 7px; padding: 0 24px; border: 2px solid #0096ea; border-radius: 32px; background: linear-gradient(90deg, #2f3fff, #00a9ff); color: #fff; font-size: 23px; font-weight: 500; box-shadow: 0 4px 8px #1570ef22; }
.glint { position: absolute; right: -6px; top: -6px; width: 28px; height: 26px; }
.user { gap: 16px; }
.avatar { flex: none; width: 64px; height: 64px; border-radius: 50%; background: #155eef; color: #fff; font-size: 26px; line-height: 64px; text-align: center; }
.avatar.big { width: 80px; height: 80px; line-height: 80px; font-size: 32px; }

/* shell */
.app { flex: 1; min-height: 0; display: flex; border-radius: 32px 32px 0 0; overflow: hidden; background: #fff; box-shadow: 0 0 8px #10182812; }
.side { flex: none; width: 432px; display: flex; flex-direction: column; padding: 32px 32px 36px; background: #fcfcfd; border-right: 2px solid #f2f3f5; }
.apphead { display: flex; gap: 16px; margin-bottom: 64px; }
.appicon { position: relative; width: 80px; height: 80px; display: grid; place-items: center; border-radius: 16px; background: #e4fbcc; }
.plane { width: 36px; height: 36px; }
.appicon i { position: absolute; right: -6px; bottom: -6px; width: 32px; height: 32px; display: grid; place-items: center; border-radius: 8px; background: #fff; box-shadow: 0 1px 4px #10182833; }
.bot { width: 18px; height: 20px; }
.appname { flex: 1; display: flex; flex-direction: column; align-items: flex-start; color: #344054; font-weight: 500; }
.appname button { width: 100%; height: 40px; justify-content: space-between; padding-right: 4px; font-weight: 500; }
.badge { height: 40px; padding: 0 8px; border: 2px solid #e9eaed; border-radius: 10px; background: #fff; color: #667085; font-size: 20px; line-height: 36px; }
.menu { display: flex; flex-direction: column; gap: 8px; width: 366px; }
.menu a { display: flex; align-items: center; gap: 18px; height: 72px; padding-left: 26px; border-radius: 12px; color: #475467; }
.menu .on { background: #e9effc; color: #155eef; }
.fold { margin-top: auto; margin-left: 28px; color: #667085; }

.main { flex: 1; min-width: 0; display: flex; flex-direction: column; padding-left: 48px; }
.titlebar { flex: none; height: 112px; display: flex; align-items: center; gap: 16px; padding-right: 48px; }
h1 { margin-right: auto; font-size: 31px; font-weight: 600; }
.btn { height: 64px; gap: 8px; padding: 0 28px; border: 2px solid #e4e7ec; border-radius: 16px; background: #fff; color: #344054; font-size: 26px; font-weight: 500; box-shadow: 0 1px 2px #1018280d; }
.btn .i32 { color: #667085; }
.model { gap: 12px; padding: 0 16px; border-color: #f79009; background: #fffaeb; color: #1d2939; }
.model i { width: 40px; height: 40px; display: grid; place-items: center; border-radius: 10px; background: #19c37d; color: #fff; }
.warn { width: 30px; height: 28px; }
.rule { width: 2px; height: 28px; background: #e4e7ec; }
.publish { gap: 10px; padding: 0 20px 0 22px; border-color: #155eef; background: #155eef; color: #fff; }

.cols { flex: 1; min-height: 0; display: grid; grid-template: minmax(0, 1fr) / 1128fr 1224fr; gap: 48px; }
.config { display: flex; flex-direction: column; gap: 16px; min-width: 0; }
.help { width: 20px; height: 20px; color: #a7acb5; }

.prompt { flex: none; border: 4px solid transparent; border-radius: 28px; background: linear-gradient(#edf2ff, #edf2ff) padding-box, linear-gradient(90deg, #53a2fd, #7a7ef8 50%, #5b3df0) border-box; box-shadow: 0 6px 10px #10182814; }
.phead { display: flex; align-items: center; height: 88px; padding: 0 48px 0 24px; }
.phead label { font-size: 27px; font-weight: 600; margin-right: 12px; }
.gen { margin-left: auto; gap: 10px; color: #444ce7; font-size: 24px; font-weight: 600; }
.pbody { position: relative; padding: 18px 0 16px 32px; border-radius: 24px; background: #fff; }
.pbody textarea { display: block; width: 100%; height: 432px; margin-bottom: 6px; resize: none; overflow: hidden; color: #475467; font-size: 26px; line-height: 43px; }
.count { display: block; width: 76px; height: 36px; border-radius: 10px; background: #f2f4f7; color: #667085; font-size: 24px; line-height: 36px; text-align: center; }
.grip { position: absolute; left: 50%; bottom: 10px; width: 40px; height: 6px; margin-left: -20px; border-radius: 3px; background: #d0d5dd; }

.card { flex: none; padding: 0 26px 26px; border-radius: 24px; background: #f2f4f8; box-shadow: inset 0 1px 0 #e6e8ee; }
.chead { display: flex; align-items: center; height: 90px; padding-top: 8px; padding-right: 22px; }
.chead > svg:first-child { margin: 0 18px 0 10px; }
.chead .braces { width: 30px; height: 26px; margin: 0 16px 0 8px; color: #2970ff; }
.chead > .braces:first-child { margin: 0 16px 0 8px; }
.doc { width: 26px; height: 30px; }
.chead h2 { font-size: 26px; font-weight: 600; color: #344054; margin-right: 12px; }
.add { margin-left: auto; gap: 15px; color: #475467; font-size: 24px; font-weight: 500; }
.enabled { margin-left: auto; padding-right: 24px; color: #667085; font-size: 24px; border-right: 2px solid #eaecf0; }
.enabled + .add { margin-left: 38px; }
.ruled { height: 82px; padding-top: 16px; padding-right: 48px; padding-left: 26px; margin: 0 -26px; border-bottom: 2px solid #e8eaee; }
.note { height: 63px; line-height: 82px; color: #667085; font-size: 24px; }
.tablebox { border-radius: 16px; overflow: hidden; background: #fff; box-shadow: 0 0 0 2px #eceef2; }
table { width: 100%; table-layout: fixed; border-collapse: collapse; text-align: left; }
.c1 { width: 29.6%; }
.c2 { width: 39.7%; }
.c3 { width: 15.7%; }
th { height: 68px; padding: 0 0 0 26px; font-size: 24px; font-weight: 500; color: #667085; border-bottom: 2px solid #e9ebf0; }
td { height: 72px; padding: 0 0 0 26px; border-bottom: 2px solid #f2f4f7; white-space: nowrap; }
tr:last-child td { border-bottom: 0; }
td button { color: #667085; vertical-align: middle; }
td button + button { margin-left: 24px; }
td:last-child { padding-left: 31px; }
.var { display: inline-block; width: 22px; height: 22px; margin-right: 10px; color: #98a2b3; vertical-align: -2px; }
.switch { appearance: none; display: block; width: 56px; height: 32px; padding: 4px; border-radius: 10px; background: #155eef; }
.switch::before { content: ""; display: block; width: 24px; height: 24px; margin-left: 24px; border-radius: 6px; background: #fff; }
.toolrow { display: flex; align-items: center; height: 82px; padding: 0 22px 0 20px; border-radius: 16px; background: #fff; color: #667085; font-size: 26px; box-shadow: 0 1px 4px #10182818; }
.toolrow .switch { margin-left: auto; }
.toolrow strong { margin: 0 16px 0 20px; font-weight: 500; color: #1d2939; }
.toolrow.next { margin-top: 8px; background: #f9fafb; }
.w { width: 44px; height: 28px; }

.debug { position: relative; min-height: 0; min-width: 0; display: flex; flex-direction: column; border: solid #e8eaee; border-width: 2px 0 0 2px; border-radius: 32px 0 0 0; background: linear-gradient(#f9fafb, #f3f4f7 84%, #f9fafc); }
.dhead { flex: none; display: flex; align-items: center; height: 92px; padding: 5px 48px 0 31px; color: #667085; }
.dhead h2 { margin-right: auto; font-size: 31px; font-weight: 600; color: #101828; }
.tog { width: 48px; height: 48px; margin-left: 16px; justify-content: center; border-radius: 14px; background: #e5ecfd; color: #155eef; }
.inputs { position: relative; z-index: 1; flex: none; display: flex; flex-direction: column; margin: 0 25px 0 24px; padding: 28px 32px 32px; border-radius: 24px; background: #fff; box-shadow: 0 0 0 1px #eceef1, 0 3px 6px #10182810; font-size: 26px; }
.inputs::before { content: ""; position: absolute; right: 33px; top: -11px; width: 23px; height: 23px; background: #fff; transform: rotate(45deg); }
.inputs label { height: 40px; line-height: 40px; margin-bottom: 12px; font-weight: 600; color: #344054; }
.inputs label span { font-size: 24px; font-weight: 400; color: #667085; }
.inputs input { height: 64px; margin-bottom: 36px; padding: 0 26px; border-radius: 16px; background: #f2f3f5; }
::placeholder { color: #98a2b3; opacity: 1; }
.select { position: relative; }
.select select { width: 100%; height: 72px; display: block; appearance: none; border-radius: 16px; background: #f9fafb; box-shadow: 0 2px 4px #10182822; }
.select svg { position: absolute; right: 25px; top: 24px; color: #1d2939; }
.openers { flex: none; display: flex; flex-direction: column; align-items: flex-start; gap: 10px; margin: 0 104px 0 135px; padding: 13px 33px 26px; border-radius: 0 0 32px 32px; background: #f2f4f8; }
.openers button { display: block; padding: 10px 32px; border: 1px solid #eaecf0; border-radius: 14px; background: #fff; color: #155eef; font-size: 24px; line-height: 36px; font-weight: 500; text-align: left; white-space: normal; box-shadow: 0 2px 4px #10182812; }
.msg { flex: none; display: flex; gap: 32px; margin: 60px 24px 0 103px; }
.msg p { flex: 1; padding: 24px 32px; border-radius: 32px; background: #e1effa; line-height: 42px; }
.foot { flex: none; margin: auto 23px 24px; }
.ask { position: relative; z-index: 1; display: flex; align-items: center; height: 104px; padding: 0 20px 0 29px; border-radius: 24px; background: #fff; box-shadow: 0 4px 14px #1018281c; }
.ask input { flex: 1; min-width: 0; font-size: 28px; }
.ask button { width: 64px; height: 64px; justify-content: center; border-radius: 16px; background: #155eef; }
.features { display: flex; align-items: center; gap: 4px; height: 103px; margin: -20px 9px 0; padding: 20px 40px 0 20px; border: 2px solid #dce2ef; border-radius: 0 0 20px 20px; background: #edf2ff; color: #667085; font-size: 24px; }
.chip { width: 46px; height: 46px; display: grid; place-items: center; border-radius: 16px; background: #0ba5ec; }
.orange { width: 50px; height: 50px; background: #f79009; }
.features span { margin-left: 12px; }
.features a { display: flex; align-items: center; gap: 12px; margin-left: auto; color: #155eef; font-weight: 500; }
```
